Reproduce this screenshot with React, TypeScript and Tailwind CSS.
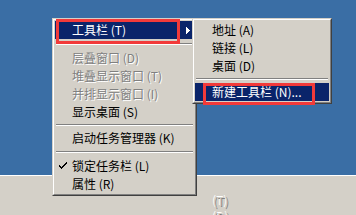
import React from 'react';

const font = { fontFamily: '"Noto Sans CJK SC", "Liberation Sans", sans-serif' };

type ItemProps = {
  label: string;
  disabled?: boolean;
  active?: boolean;
  checked?: boolean;
  arrow?: boolean;
};

function MenuItem({ label, disabled, active, checked, arrow }: ItemProps) {
  return (
    <div
      className={`relative flex h-[18px] items-center pl-[17px] text-[12px] leading-none whitespace-nowrap ${
        active
          ? 'bg-[#0a246a] text-white'
          : disabled
          ? 'text-[#808080] [text-shadow:1px_1px_0_#ffffff]'
          : 'text-black'
      }`}
    >
      {checked && (
        <svg className="absolute left-[4px] top-[5px]" width="8" height="7" viewBox="0 0 8 7">
          <path d="M0 3h1v1h1v1h1V4h1V3h1V2h1V1h1V0h1v2H7v1H6v1H5v1H4v1H3v1H2V6H1V5H0z" fill="#000" />
        </svg>
      )}
      <span>{label}</span>
      {arrow && (
        <svg className="absolute right-[4px] top-[6px]" width="4" height="7" viewBox="0 0 4 7">
          <path d="M0 0h1v1h1v1h1v1h1v1H3v1H2v1H1v1H0z" fill={active ? '#fff' : '#000'} />
        </svg>
      )}
    </div>
  );
}

function Separator({ h = 'h-[8px]' }: { h?: string }) {
  return (
    <div className={`flex ${h} items-center px-[1px]`}>
      <div className="w-full border-t border-b border-t-[#808080] border-b-white" />
    </div>
  );
}

function MenuFrame({ children, className }: { children: React.ReactNode; className: string }) {
  return (
    <div
      className={`absolute border border-t-[#d4d0c8] border-l-[#d4d0c8] border-r-[#404040] border-b-[#404040] bg-[#d4d0c8] ${className}`}
    >
      <div className="border border-t-white border-l-white border-r-[#808080] border-b-[#808080] p-[1px]">
        {children}
      </div>
    </div>
  );
}

export default function App() {
  return (
    <div className="relative flex h-[215px] w-[356px] flex-col overflow-hidden" style={font}>
      <div className="h-[175px] shrink-0 bg-[#3a6ea5]" />
      <div className="min-h-0 flex-1 overflow-hidden border-t border-white bg-[#d4d0c8]">
        <div className="ml-[213px] flex flex-col text-[12px] leading-[16px] text-[#d4d0c8] [text-shadow:1px_1px_0_#808080,-1px_-1px_0_#ffffff]">
          <span className="mt-[17px]">(T)</span>
          <span>(D)</span>
        </div>
      </div>

      <MenuFrame className="left-[52px] top-[18px] w-[145px]">
        <MenuItem label="工具栏 (T)" active arrow />
        <Separator h="h-[10px]" />
        <MenuItem label="层叠窗口 (D)" disabled />
        <MenuItem label="堆叠显示窗口 (T)" disabled />
        <MenuItem label="并排显示窗口 (I)" disabled />
        <MenuItem label="显示桌面 (S)" />
        <Separator />
        <MenuItem label="启动任务管理器 (K)" />
        <Separator h="h-[10px]" />
        <MenuItem label="锁定任务栏 (L)" checked />
        <MenuItem label="属性 (R)" />
      </MenuFrame>

      <MenuFrame className="left-[192px] top-[18px] w-[140px]">
        <MenuItem label="地址 (A)" />
        <MenuItem label="链接 (L)" />
        <MenuItem label="桌面 (D)" />
        <Separator />
        <MenuItem label="新建工具栏 (N)..." active />
      </MenuFrame>

      <div className="absolute left-[56px] top-[19px] h-[25px] w-[124px] border-[3px] border-[#f23a3a]" />
      <div className="absolute left-[203px] top-[83px] h-[22px] w-[112px] border-[3px] border-[#f23a3a]" />
    </div>
  );
}
